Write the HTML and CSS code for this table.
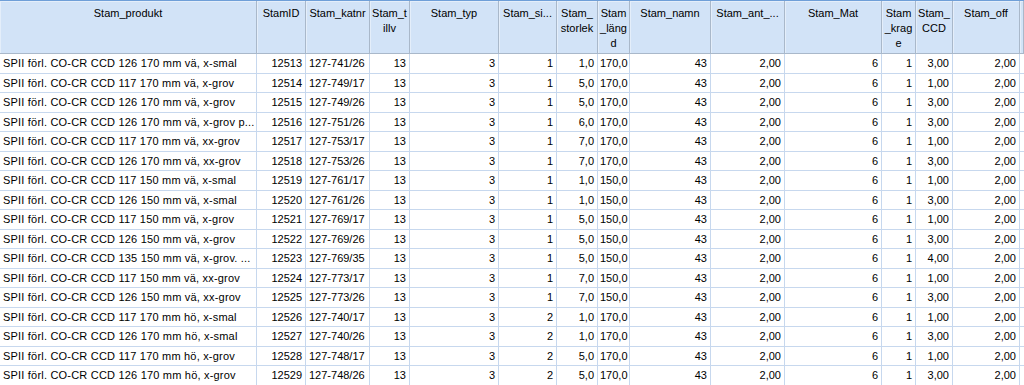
FILE: index.html
```html
<!DOCTYPE html>
<html lang="sv">
<head>
<meta charset="utf-8">
<title>Data View</title>
<link rel="stylesheet" href="styles.css">
</head>
<body>
<div class="sheet">
  <div class="h">Stam_produkt</div>
  <div class="h">StamID</div>
  <div class="h">Stam_katnr</div>
  <div class="h">Stam_t<br>illv</div>
  <div class="h">Stam_typ</div>
  <div class="h">Stam_si...</div>
  <div class="h">Stam_<br>storlek</div>
  <div class="h">Stam<br>_läng<br>d</div>
  <div class="h">Stam_namn</div>
  <div class="h">Stam_ant_...</div>
  <div class="h">Stam_Mat</div>
  <div class="h">Stam<br>_krag<br>e</div>
  <div class="h">Stam_<br>CCD</div>
  <div class="h">Stam_off</div>
  <div class="h"></div>

  <div class="c p">SPII förl. CO-CR CCD 126 170 mm vä, x-smal</div><div class="c">12513</div><div class="c s">127-741/26</div><div class="c">13</div><div class="c">3</div><div class="c">1</div><div class="c">1,0</div><div class="c">170,0</div><div class="c">43</div><div class="c">2,00</div><div class="c">6</div><div class="c">1</div><div class="c">3,00</div><div class="c">2,00</div><div class="c"></div>
  <div class="c p">SPII förl. CO-CR CCD 117 170 mm vä, x-grov</div><div class="c">12514</div><div class="c s">127-749/17</div><div class="c">13</div><div class="c">3</div><div class="c">1</div><div class="c">5,0</div><div class="c">170,0</div><div class="c">43</div><div class="c">2,00</div><div class="c">6</div><div class="c">1</div><div class="c">1,00</div><div class="c">2,00</div><div class="c"></div>
  <div class="c p">SPII förl. CO-CR CCD 126 170 mm vä, x-grov</div><div class="c">12515</div><div class="c s">127-749/26</div><div class="c">13</div><div class="c">3</div><div class="c">1</div><div class="c">5,0</div><div class="c">170,0</div><div class="c">43</div><div class="c">2,00</div><div class="c">6</div><div class="c">1</div><div class="c">3,00</div><div class="c">2,00</div><div class="c"></div>
  <div class="c p">SPII förl. CO-CR CCD 126 170 mm vä, x-grov p...</div><div class="c">12516</div><div class="c s">127-751/26</div><div class="c">13</div><div class="c">3</div><div class="c">1</div><div class="c">6,0</div><div class="c">170,0</div><div class="c">43</div><div class="c">2,00</div><div class="c">6</div><div class="c">1</div><div class="c">3,00</div><div class="c">2,00</div><div class="c"></div>
  <div class="c p">SPII förl. CO-CR CCD 117 170 mm vä, xx-grov</div><div class="c">12517</div><div class="c s">127-753/17</div><div class="c">13</div><div class="c">3</div><div class="c">1</div><div class="c">7,0</div><div class="c">170,0</div><div class="c">43</div><div class="c">2,00</div><div class="c">6</div><div class="c">1</div><div class="c">1,00</div><div class="c">2,00</div><div class="c"></div>
  <div class="c p">SPII förl. CO-CR CCD 126 170 mm vä, xx-grov</div><div class="c">12518</div><div class="c s">127-753/26</div><div class="c">13</div><div class="c">3</div><div class="c">1</div><div class="c">7,0</div><div class="c">170,0</div><div class="c">43</div><div class="c">2,00</div><div class="c">6</div><div class="c">1</div><div class="c">3,00</div><div class="c">2,00</div><div class="c"></div>
  <div class="c p">SPII förl. CO-CR CCD 117 150 mm vä, x-smal</div><div class="c">12519</div><div class="c s">127-761/17</div><div class="c">13</div><div class="c">3</div><div class="c">1</div><div class="c">1,0</div><div class="c">150,0</div><div class="c">43</div><div class="c">2,00</div><div class="c">6</div><div class="c">1</div><div class="c">1,00</div><div class="c">2,00</div><div class="c"></div>
  <div class="c p">SPII förl. CO-CR CCD 126 150 mm vä, x-smal</div><div class="c">12520</div><div class="c s">127-761/26</div><div class="c">13</div><div class="c">3</div><div class="c">1</div><div class="c">1,0</div><div class="c">150,0</div><div class="c">43</div><div class="c">2,00</div><div class="c">6</div><div class="c">1</div><div class="c">3,00</div><div class="c">2,00</div><div class="c"></div>
  <div class="c p">SPII förl. CO-CR CCD 117 150 mm vä, x-grov</div><div class="c">12521</div><div class="c s">127-769/17</div><div class="c">13</div><div class="c">3</div><div class="c">1</div><div class="c">5,0</div><div class="c">150,0</div><div class="c">43</div><div class="c">2,00</div><div class="c">6</div><div class="c">1</div><div class="c">1,00</div><div class="c">2,00</div><div class="c"></div>
  <div class="c p">SPII förl. CO-CR CCD 126 150 mm vä, x-grov</div><div class="c">12522</div><div class="c s">127-769/26</div><div class="c">13</div><div class="c">3</div><div class="c">1</div><div class="c">5,0</div><div class="c">150,0</div><div class="c">43</div><div class="c">2,00</div><div class="c">6</div><div class="c">1</div><div class="c">3,00</div><div class="c">2,00</div><div class="c"></div>
  <div class="c p">SPII förl. CO-CR CCD 135 150 mm vä, x-grov. ...</div><div class="c">12523</div><div class="c s">127-769/35</div><div class="c">13</div><div class="c">3</div><div class="c">1</div><div class="c">5,0</div><div class="c">150,0</div><div class="c">43</div><div class="c">2,00</div><div class="c">6</div><div class="c">1</div><div class="c">4,00</div><div class="c">2,00</div><div class="c"></div>
  <div class="c p">SPII förl. CO-CR CCD 117 150 mm vä, xx-grov</div><div class="c">12524</div><div class="c s">127-773/17</div><div class="c">13</div><div class="c">3</div><div class="c">1</div><div class="c">7,0</div><div class="c">150,0</div><div class="c">43</div><div class="c">2,00</div><div class="c">6</div><div class="c">1</div><div class="c">1,00</div><div class="c">2,00</div><div class="c"></div>
  <div class="c p">SPII förl. CO-CR CCD 126 150 mm vä, xx-grov</div><div class="c">12525</div><div class="c s">127-773/26</div><div class="c">13</div><div class="c">3</div><div class="c">1</div><div class="c">7,0</div><div class="c">150,0</div><div class="c">43</div><div class="c">2,00</div><div class="c">6</div><div class="c">1</div><div class="c">3,00</div><div class="c">2,00</div><div class="c"></div>
  <div class="c p">SPII förl. CO-CR CCD 117 170 mm hö, x-smal</div><div class="c">12526</div><div class="c s">127-740/17</div><div class="c">13</div><div class="c">3</div><div class="c">2</div><div class="c">1,0</div><div class="c">170,0</div><div class="c">43</div><div class="c">2,00</div><div class="c">6</div><div class="c">1</div><div class="c">1,00</div><div class="c">2,00</div><div class="c"></div>
  <div class="c p">SPII förl. CO-CR CCD 126 170 mm hö, x-smal</div><div class="c">12527</div><div class="c s">127-740/26</div><div class="c">13</div><div class="c">3</div><div class="c">2</div><div class="c">1,0</div><div class="c">170,0</div><div class="c">43</div><div class="c">2,00</div><div class="c">6</div><div class="c">1</div><div class="c">3,00</div><div class="c">2,00</div><div class="c"></div>
  <div class="c p">SPII förl. CO-CR CCD 117 170 mm hö, x-grov</div><div class="c">12528</div><div class="c s">127-748/17</div><div class="c">13</div><div class="c">3</div><div class="c">2</div><div class="c">5,0</div><div class="c">170,0</div><div class="c">43</div><div class="c">2,00</div><div class="c">6</div><div class="c">1</div><div class="c">1,00</div><div class="c">2,00</div><div class="c"></div>
  <div class="c p">SPII förl. CO-CR CCD 126 170 mm hö, x-grov</div><div class="c">12529</div><div class="c s">127-748/26</div><div class="c">13</div><div class="c">3</div><div class="c">2</div><div class="c">5,0</div><div class="c">170,0</div><div class="c">43</div><div class="c">2,00</div><div class="c">6</div><div class="c">1</div><div class="c">3,00</div><div class="c">2,00</div><div class="c"></div>
</div>
</body>
</html>
```
FILE: styles.css
```css
html, body {
  margin: 0;
  padding: 0;
  background: #ffffff;
  overflow: hidden;
}

.sheet {
  display: grid;
  grid-template-columns: 257px 49px 64px 40px 89px 58px 41px 32px 81px 74px 97px 34px 37px 67px 4px;
  grid-template-rows: 53px;
  grid-auto-rows: 19.5px;
  width: 1024px;
  height: 385px;
  overflow: hidden;
  font-family: "Liberation Sans", Arial, sans-serif;
  font-size: 11px;
  color: #000000;
  border-top: 1px solid #6f9fd8;
  box-sizing: border-box;
}

.h {
  box-sizing: border-box;
  background: #d2e3f7;
  border-right: 1px solid #a9b8ca;
  border-bottom: 1px solid #a9b8ca;
  box-shadow: inset 1px 1px 0 #e4eefa;
  text-align: center;
  padding: 5px 1px 0;
  line-height: 15px;
  white-space: nowrap;
  overflow: hidden;
}

.c {
  box-sizing: border-box;
  border-right: 1px solid #c7d8ee;
  border-bottom: 1px solid #c7d8ee;
  text-align: right;
  padding: 0 3px 0 2px;
  line-height: 18px;
  white-space: nowrap;
  overflow: hidden;
}

.c.s,
.c.p {
  text-align: left;
  padding-left: 3px;
}

.c.p {
  letter-spacing: 0.2px;
}
```
